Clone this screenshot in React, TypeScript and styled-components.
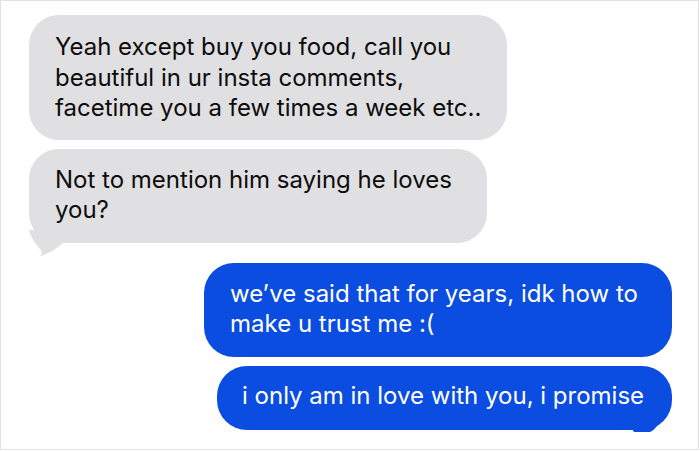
import React from "react";
import styled, { createGlobalStyle } from "styled-components";

const Global = createGlobalStyle`
  html, body { margin: 0; padding: 0; background: #ffffff; }
  body { font-family: Inter, "Liberation Sans", Arial, sans-serif; }
`;

const Frame = styled.div`
  box-sizing: border-box;
  width: 699px;
  height: 450px;
  border: 1px solid #e2e2e2;
  background: #ffffff;
  padding: 14px 26px 0 28px;
  display: flex;
  flex-direction: column;
  overflow: hidden;
`;

const Row = styled.div<{ $side: "left" | "right"; $gap: number }>`
  display: flex;
  justify-content: ${(p) => (p.$side === "left" ? "flex-start" : "flex-end")};
  margin-top: ${(p) => p.$gap}px;
`;

const Bubble = styled.div<{ $kind: "in" | "out"; $w: number; $pad: string }>`
  position: relative;
  box-sizing: border-box;
  width: ${(p) => p.$w}px;
  padding: ${(p) => p.$pad};
  border-radius: 30px;
  background: ${(p) => (p.$kind === "in" ? "#e0e0e2" : "#0b4de0")};
  color: ${(p) => (p.$kind === "in" ? "#0c0c0c" : "#ffffff")};
  font-family: Inter, "Liberation Sans", Arial, sans-serif;
  font-size: 24px;
  line-height: 30.5px;
  white-space: pre-line;
`;

const Tail = styled.svg<{ $side: "left" | "right" }>`
  position: absolute;
  ${(p) => (p.$side === "left" ? "left: -2px; bottom: -13px;" : "right: 6px; bottom: -16px;")}
  width: 36px;
  height: 26px;
  overflow: visible;
`;

export default function App() {
  return (
    <>
      <Global />
      <Frame>
        <Row $side="left" $gap={0}>
          <Bubble $kind="in" $w={478} $pad="17px 16px 16px 26px">
            {"Yeah except buy you food, call you\nbeautiful in ur insta comments,\nfacetime you a few times a week etc.."}
          </Bubble>
        </Row>
        <Row $side="left" $gap={9}>
          <Bubble $kind="in" $w={458} $pad="16px 16px 17px 26px">
            {"Not to mention him saying he loves\nyou?"}
            <Tail $side="left" viewBox="0 0 36 26">
              <path d="M2 0 C4 8 10 16 14 20 C16 23 14 25 13 26 C22 24 30 18 36 13 L36 0 Z" fill="#e0e0e2" />
            </Tail>
          </Bubble>
        </Row>
        <Row $side="right" $gap={20}>
          <Bubble $kind="out" $w={468} $pad="16px 16px 17px 26px">
            {"we\u2019ve said that for years, idk how to\nmake u trust me :("}
          </Bubble>
        </Row>
        <Row $side="right" $gap={9}>
          <Bubble $kind="out" $w={455} $pad="15px 16px 19px 25px">
            {"i only am in love with you, i promise"}
            <Tail $side="right" viewBox="0 0 36 26">
              <path d="M0 0 L30 0 C28 6 24 10 20 12 L4 12 C2 10 1 5 0 0 Z" fill="#0b4de0" />
            </Tail>
          </Bubble>
        </Row>
      </Frame>
    </>
  );
}
